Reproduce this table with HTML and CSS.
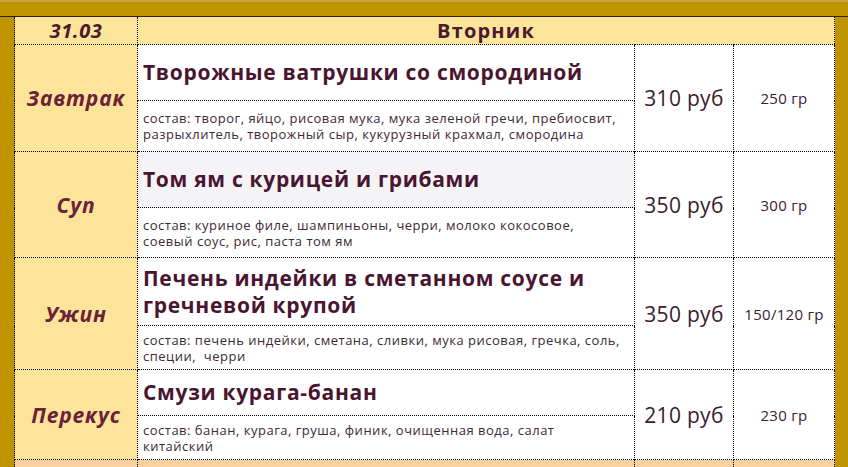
FILE: index.html
```html
<!DOCTYPE html>
<html lang="ru">
<head>
<meta charset="utf-8">
<title>Меню</title>
<link rel="stylesheet" href="styles.css">
</head>
<body>
<div class="topbar"></div>
<div class="frame">
<table class="menu">
  <colgroup>
    <col class="c-meal"><col class="c-dish"><col class="c-price"><col class="c-weight">
  </colgroup>
  <tr class="head">
    <td class="date">31.03</td>
    <td class="day" colspan="3">Вторник</td>
  </tr>
  <tr class="r1a">
    <td class="meal" rowspan="2">Завтрак</td>
    <td class="name">Творожные ватрушки со смородиной</td>
    <td class="price" rowspan="2">310 руб</td>
    <td class="weight" rowspan="2">250 гр</td>
  </tr>
  <tr class="r1b">
    <td class="comp">состав: творог, яйцо, рисовая мука, мука зеленой гречи, пребиосвит, разрыхлитель, творожный сыр, кукурузный крахмал, смородина</td>
  </tr>
  <tr class="r2a">
    <td class="meal" rowspan="2">Суп</td>
    <td class="name grey">Том ям с курицей и грибами</td>
    <td class="price" rowspan="2">350 руб</td>
    <td class="weight" rowspan="2">300 гр</td>
  </tr>
  <tr class="r2b">
    <td class="comp">состав: куриное филе, шампиньоны, черри, молоко кокосовое, соевый соус, рис, паста том ям</td>
  </tr>
  <tr class="r3a">
    <td class="meal" rowspan="2">Ужин</td>
    <td class="name">Печень индейки в сметанном соусе и гречневой крупой</td>
    <td class="price" rowspan="2">350 руб</td>
    <td class="weight" rowspan="2">150/120 гр</td>
  </tr>
  <tr class="r3b">
    <td class="comp">состав: печень индейки, сметана, сливки, мука рисовая, гречка, соль, специи,&nbsp; черри</td>
  </tr>
  <tr class="r4a">
    <td class="meal" rowspan="2">Перекус</td>
    <td class="name">Смузи курага-банан</td>
    <td class="price" rowspan="2">210 руб</td>
    <td class="weight" rowspan="2">230 гр</td>
  </tr>
  <tr class="r4b">
    <td class="comp">состав: банан, курага, груша, финик, очищенная вода, салат китайский</td>
  </tr>
  <tr class="next">
    <td></td><td></td><td></td><td></td>
  </tr>
</table>
</div>
</body>
</html>
```

FILE: styles.css
```css
html, body {
  margin: 0;
  padding: 0;
  background: #c09300;
  height: 467px;
  overflow: hidden;
  font-family: "Open Sans", "DejaVu Sans", sans-serif;
  color: #4a1a2e;
}

.topbar {
  height: 14px;
  background: #c09300;
  border-top: 2px solid #cda53c;
  border-bottom: 1px solid #2e2010;
}

.frame {
  padding: 0 14px 0 14px;
}

.menu {
  width: 820px;
  border-collapse: collapse;
  table-layout: fixed;
  border-left: 1px dotted #000;
  border-right: 1px dotted #000;
}

.c-meal { width: 123px; }
.c-dish { width: 497px; }
.c-price { width: 99px; }
.c-weight { width: 101px; }

.menu td {
  border: 1px dotted #000;
  padding: 0;
  vertical-align: middle;
}

.head td {
  border-top: none;
  background: #fde49b;
  height: 25px;
  font-weight: 700;
  text-align: center;
  color: #4a1a2e;
}

.head .date {
  font-style: italic;
  font-size: 20px;
  letter-spacing: 0.6px;
}

.head .day {
  font-size: 20px;
  letter-spacing: 1.2px;
  border-right: none;
}

.meal {
  background: #fde49b;
  text-align: center;
  font-weight: 700;
  font-style: italic;
  font-size: 21px;
  letter-spacing: 0.8px;
  color: #6b2138;
}

.name {
  background: #fff;
  font-weight: 700;
  font-size: 21px;
  letter-spacing: 0.7px;
  line-height: 27px;
  padding: 0 5px !important;
  color: #4a1530;
}

.name.grey {
  background: #f4f4f6;
}

.comp {
  background: #fff;
  font-size: 13px;
  letter-spacing: 0.5px;
  line-height: 16px;
  padding: 0 14px 0 5px !important;
  color: #3d2a36;
}

.price {
  background: #fff;
  text-align: center;
  font-size: 21px;
  letter-spacing: 0.3px;
  color: #3b2030;
}

.weight {
  background: #fff;
  text-align: center;
  font-size: 15px;
  letter-spacing: 0.3px;
  color: #3b2030;
}

.r1a td.name { height: 55px; }
.r1b td { height: 50px; }
.r2a td.name { height: 55px; }
.r2b td { height: 49px; }
.r3a td.name { height: 67px; }
.r3b td { height: 43px; }
.r4a td.name { height: 45px; }
.r4b td { height: 43px; }

.next td {
  background: #f9d0a0;
  height: 20px;
}
```
